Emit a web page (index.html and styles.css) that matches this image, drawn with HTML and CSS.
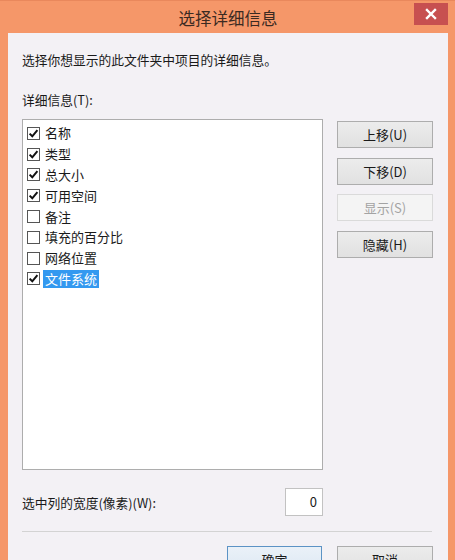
FILE: index.html
```html
<!DOCTYPE html>
<html lang="zh-CN">
<head>
<meta charset="utf-8">
<title>选择详细信息</title>
<link rel="stylesheet" href="styles.css">
</head>
<body>
<div class="window">
  <div class="titlebar">
    <div></div>
    <div class="title">选择详细信息</div>
    <div class="close-wrap">
      <div class="close">
        <svg width="12" height="12" viewBox="0 0 12 12"><path d="M2 2 L10 10 M10 2 L2 10" stroke="#fff" stroke-width="2.4" stroke-linecap="square" fill="none"/></svg>
      </div>
    </div>
  </div>
  <div class="panel">
    <div class="intro">选择你想显示的此文件夹中项目的详细信息。</div>
    <div class="label">详细信息(T):</div>
    <div class="main">
      <div class="list">
        <div class="item"><span class="cb on"><svg class="tick" width="11" height="11" viewBox="0 0 11 11"><path d="M1.6 5.6 L4.3 8.3 L9.4 2.2" stroke="#111" stroke-width="2" fill="none"/></svg></span><span class="txt">名称</span></div>
        <div class="item"><span class="cb on"><svg class="tick" width="11" height="11" viewBox="0 0 11 11"><path d="M1.6 5.6 L4.3 8.3 L9.4 2.2" stroke="#111" stroke-width="2" fill="none"/></svg></span><span class="txt">类型</span></div>
        <div class="item"><span class="cb on"><svg class="tick" width="11" height="11" viewBox="0 0 11 11"><path d="M1.6 5.6 L4.3 8.3 L9.4 2.2" stroke="#111" stroke-width="2" fill="none"/></svg></span><span class="txt">总大小</span></div>
        <div class="item"><span class="cb on"><svg class="tick" width="11" height="11" viewBox="0 0 11 11"><path d="M1.6 5.6 L4.3 8.3 L9.4 2.2" stroke="#111" stroke-width="2" fill="none"/></svg></span><span class="txt">可用空间</span></div>
        <div class="item"><span class="cb"></span><span class="txt">备注</span></div>
        <div class="item"><span class="cb"></span><span class="txt">填充的百分比</span></div>
        <div class="item"><span class="cb"></span><span class="txt">网络位置</span></div>
        <div class="item"><span class="cb on"><svg class="tick" width="11" height="11" viewBox="0 0 11 11"><path d="M1.6 5.6 L4.3 8.3 L9.4 2.2" stroke="#111" stroke-width="2" fill="none"/></svg></span><span class="txt sel">文件系统</span></div>
      </div>
      <div class="side">
        <div class="btn">上移(U)</div>
        <div class="btn">下移(D)</div>
        <div class="btn disabled">显示(S)</div>
        <div class="btn">隐藏(H)</div>
      </div>
    </div>
    <div class="width-row">
      <div class="wlabel">选中列的宽度(像素)(W):</div>
      <div class="num">0</div>
    </div>
    <div class="sep"></div>
    <div class="footer">
      <div class="btn ok">确定</div>
      <div class="btn cancel">取消</div>
    </div>
  </div>
</div>
</body>
</html>
```

FILE: styles.css
```css
html, body {
  margin: 0;
  padding: 0;
  height: 560px;
  overflow: hidden;
  background: #f59769;
}
body {
  font-family: "Noto Sans CJK SC", "Microsoft YaHei", sans-serif;
  color: #1a1a1a;
}
.window {
  width: 455px;
  height: 620px;
  background: #f59769;
  border-top: 1px solid #e9885c;
  box-sizing: border-box;
}
.titlebar {
  height: 32px;
  display: grid;
  grid-template-columns: 1fr auto 1fr;
  padding: 0 7px 0 8px;
}
.title {
  font-size: 16.5px;
  line-height: 20px;
  padding-top: 7px;
  color: #3b2a22;
}
.close-wrap {
  display: flex;
  justify-content: flex-end;
}
.close {
  width: 34px;
  height: 22px;
  margin-top: 2px;
  background: #c75050;
  display: flex;
  align-items: center;
  justify-content: center;
}
.panel {
  margin: 0 7px 0 8px;
  background: #f3f1f5;
  padding: 18px 15px 0 14px;
  height: 600px;
  box-sizing: border-box;
  font-size: 12.75px;
}
.intro {
  line-height: 18px;
}
.label {
  line-height: 18px;
  margin-top: 22px;
}
.main {
  display: flex;
  gap: 14px;
  margin-top: 10px;
}
.list {
  width: 301px;
  height: 351px;
  box-sizing: border-box;
  background: #fff;
  border: 1px solid #adadad;
  padding: 3px 0 0 4px;
}
.item {
  height: 20.8px;
  display: flex;
  align-items: center;
  font-size: 13px;
}
.cb {
  width: 13px;
  height: 13px;
  box-sizing: border-box;
  border: 1px solid #555;
  background: #fff;
  margin-right: 3px;
  display: flex;
  align-items: center;
  justify-content: center;
}
.tick {
  display: block;
}
.txt {
  padding: 0 2px;
  line-height: 18px;
}
.txt.sel {
  background: #3399f0;
  color: #fff;
}
.side {
  display: flex;
  flex-direction: column;
  gap: 9.67px;
  padding-top: 2px;
}
.btn {
  width: 96px;
  height: 27px;
  box-sizing: border-box;
  border: 1px solid #adadad;
  background: linear-gradient(#ececec, #e1e1e1);
  display: flex;
  align-items: center;
  justify-content: center;
  font-size: 13px;
  color: #1a1a1a;
}
.btn.disabled {
  background: #f4f4f4;
  border-color: #dadada;
  color: #a3a3a3;
}
.width-row {
  display: flex;
  align-items: center;
  justify-content: space-between;
  margin-top: 18px;
  width: 301px;
}
.num {
  width: 38px;
  height: 28px;
  box-sizing: border-box;
  border: 1px solid #c2c2c2;
  background: #fff;
  text-align: right;
  padding: 3px 5px 0 0;
  font-size: 13px;
}
.sep {
  height: 1px;
  background: #d3d3d3;
  margin-top: 15px;
  margin-right: 1px;
}
.footer {
  display: flex;
  justify-content: flex-end;
  gap: 15px;
  margin-top: 14px;
}
.btn.ok {
  width: 95px;
  border-color: #5c93c5;
  background: linear-gradient(#eaf1f8, #dde8f3);
}
```
